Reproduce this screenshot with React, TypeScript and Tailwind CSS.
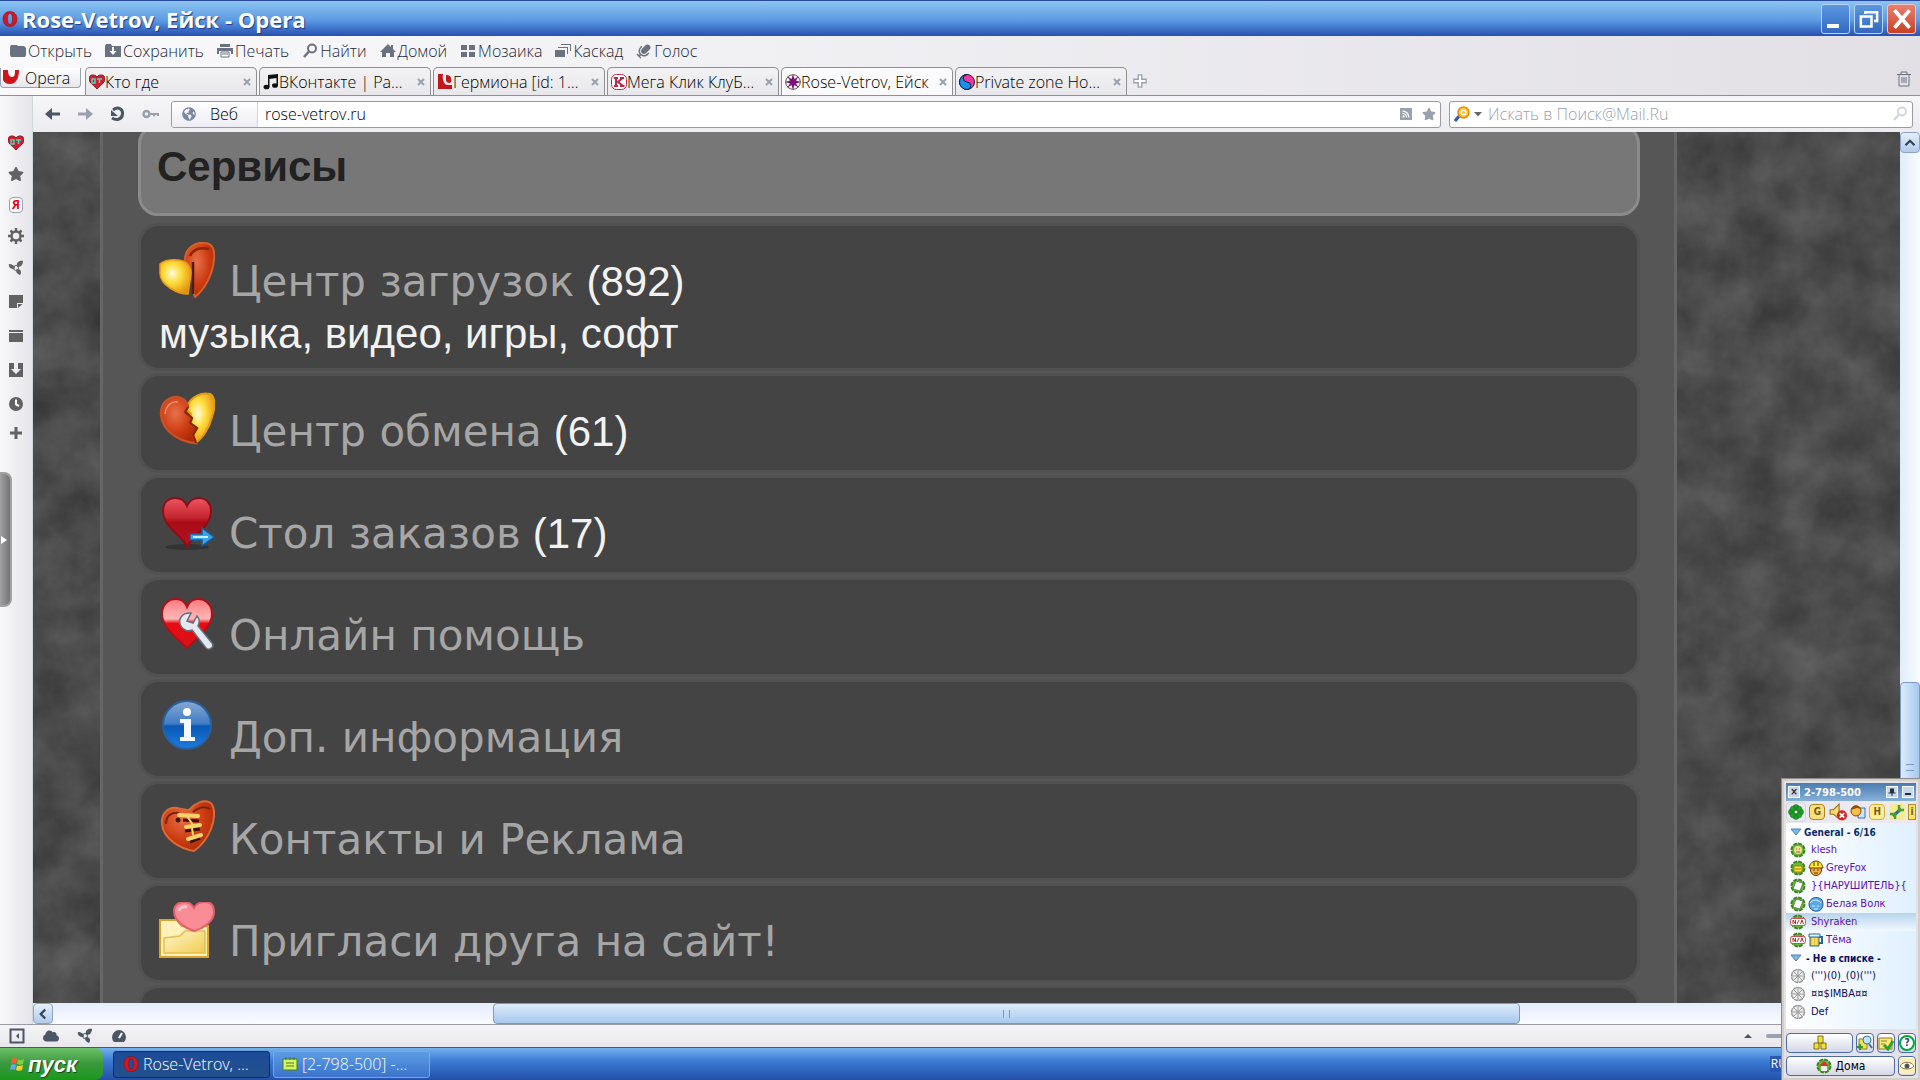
import type { ReactNode } from "react";
import { FaCloud, FaGlobeAmericas, FaMicrophone, FaRss, FaStar } from "react-icons/fa";

const UI = "font-['Open_Sans','Noto_Sans',sans-serif]";

const HEART = "M28 52 C20 44 3 32 3 18 C3 8 10 3 17 3 C22 3 26 6 28 11 C30 6 34 3 39 3 C46 3 53 8 53 18 C53 32 36 44 28 52 Z";

function Gradients() {
  return (
    <svg width="0" height="0" className="absolute" aria-hidden="true">
      <defs>
        <radialGradient id="gold" cx="0.4" cy="0.4" r="0.7">
          <stop offset="0" stopColor="#fffbe0" />
          <stop offset="0.4" stopColor="#ffdd3c" />
          <stop offset="1" stopColor="#e08a08" />
        </radialGradient>
        <radialGradient id="rust" cx="0.4" cy="0.35" r="0.7">
          <stop offset="0" stopColor="#e8714a" />
          <stop offset="0.6" stopColor="#cc3c12" />
          <stop offset="1" stopColor="#a82a08" />
        </radialGradient>
        <linearGradient id="red" x1="0" y1="0" x2="0" y2="1">
          <stop offset="0" stopColor="#ee5560" />
          <stop offset="0.4" stopColor="#c42630" />
          <stop offset="0.5" stopColor="#a80c16" />
          <stop offset="1" stopColor="#b41420" />
        </linearGradient>
        <linearGradient id="gloss" x1="0" y1="0" x2="0" y2="1">
          <stop offset="0" stopColor="#ff7a80" />
          <stop offset="0.4" stopColor="#ffb8b8" />
          <stop offset="0.5" stopColor="#e80c14" />
          <stop offset="1" stopColor="#d81018" />
        </linearGradient>
        <linearGradient id="info" x1="0" y1="0" x2="0" y2="1">
          <stop offset="0" stopColor="#86a8d4" />
          <stop offset="0.48" stopColor="#3f7cc4" />
          <stop offset="0.52" stopColor="#0a58b4" />
          <stop offset="1" stopColor="#1c7ce0" />
        </linearGradient>
        <linearGradient id="folder" x1="0" y1="0" x2="1" y2="1">
          <stop offset="0" stopColor="#fff6cc" />
          <stop offset="1" stopColor="#f0cc50" />
        </linearGradient>
      </defs>
    </svg>
  );
}

function Big({ children }: { children: ReactNode }) {
  return <svg viewBox="0 0 56 56" className="size-14 shrink-0 self-start" aria-hidden="true">{children}</svg>;
}

const DownloadsIcon = () => (
  <Big>
    <path d="M26 18 C26 7 35 0 45 1 C54 1 56 8 55 17 C54 33 45 48 36 55 C34 52 34 40 33 30 C32 24 28 24 26 18 Z" fill="url(#rust)" stroke="#d8602a" strokeWidth="2" />
    <path d="M31 14 C34 7 41 5 50 7" fill="none" stroke="#8c2405" strokeWidth="2.500" />
    <path d="M34 20 L34 52" stroke="#5a1a08" strokeWidth="2.500" />
    <path d="M1 22 C6 17 16 17 24 19 C30 22 32 26 32 32 L29 52 C20 52 0 44 1 30 Z" fill="url(#gold)" stroke="#e89a14" strokeWidth="1.500" />
  </Big>
);

const ExchangeIcon = () => (
  <Big>
    <path d="M28 14 C32 5 42 0 51 2 C57 5 56 17 53 25 C50 37 43 47 36 51 L33 46 L37 36 L30 30 L32 22 L28 18 Z" fill="url(#gold)" stroke="#e89a14" strokeWidth="2" />
    <path d="M2 22 C2 10 10 5 18 5 C24 6 28 9 29 15 L26 20 L33 26 L31 31 L38 36 L34 43 L37 51 C26 51 3 42 2 22 Z" fill="url(#rust)" stroke="#c85024" strokeWidth="2.500" />
    <path d="M6 22 C7 13 13 9 19 10" fill="none" stroke="#f09070" strokeWidth="1.500" />
    <path d="M29 15 L26 20 L33 26 L31 31 L38 36 L34 43 L37 51" fill="none" stroke="#8c2405" strokeWidth="2" />
  </Big>
);

const OrdersIcon = () => (
  <Big>
    <ellipse cx="28" cy="53" rx="22" ry="3" fill="#333" />
    <path d="M28 53 C25 42 4 34 4 17 C4 8 10 4 16 4 C22 4 26 7 28 12 C30 7 34 4 40 4 C47 4 52 9 52 17 C52 34 32 42 28 53 Z" fill="url(#red)" stroke="#8a1018" strokeWidth="2" />
    <path d="M31 40 H43 V34 L55 43 L43 52 V46 H31 Z" fill="#3aa4ea" stroke="#1a5c98" strokeWidth="1.500" />
    <path d="M34 43 H49" stroke="#c4ecff" strokeWidth="2" />
  </Big>
);

const HelpIcon = () => (
  <Big>
    <path d={HEART} fill="url(#gloss)" stroke="#b01018" strokeWidth="2" />
    <path d="M32 17 C24 16 18 23 22 30 C24 34 29 36 33 34 L47 52 C50 55 56 51 53 47 L39 30 C41 26 40 22 38 20 L34 27 L28 25 Z" fill="#e4e8f0" stroke="#686c78" strokeWidth="1.500" />
  </Big>
);

const InfoIcon = () => (
  <Big>
    <circle cx="28" cy="27" r="24" fill="url(#info)" stroke="#2a609c" strokeWidth="2" />
    <circle cx="28" cy="14" r="4" fill="#fff" />
    <path d="M21 21 H32 V39 H36 V43 H21 V39 H25 V25 H21 Z" fill="#f4f8ff" />
  </Big>
);

const ContactsIcon = () => (
  <Big>
    <path d="M3 24 C2 12 10 7 18 8 C23 9 27 10 30 10 C36 3 44 0 50 2 C57 5 56 19 52 29 C48 39 42 46 35 51 C22 49 4 39 3 24 Z" fill="url(#rust)" stroke="#dc6a34" strokeWidth="2" />
    <path d="M7 24 C7 15 13 12 20 13 M34 12 C40 7 46 6 51 9" fill="none" stroke="#7c2206" strokeWidth="2" />
    <circle cx="19" cy="20" r="2.500" fill="#501404" />
    <path d="M24 20 L40 21 M26 31 L41 29 M31 42 L41 38" stroke="#401004" strokeWidth="3" />
    <path d="M20 15 L39 16 M27 27 L41 25 M29 39 L42 35" stroke="#f6d468" strokeWidth="4" strokeLinecap="round" />
    <path d="M28 16 L34 25 M33 28 L34 35" stroke="#f6d468" strokeWidth="2" />
  </Big>
);

const InviteIcon = () => (
  <Big>
    <path d="M1 18 H18 L23 24 H49 V55 H1 Z" fill="#fff2bc" stroke="#d8a430" strokeWidth="2" />
    <path d="M5 36 L21 34 L26 29 H46 V51 H5 Z" fill="url(#folder)" stroke="#e8bc4c" strokeWidth="1.500" />
    <path d="M35 29 C28 27 15 20 15 9 C15 3 20 0 25 0 C30 0 33 2 35 6 C37 2 41 0 46 0 C52 0 55 4 55 10 C55 20 43 27 35 29 Z" fill="#f98c94" stroke="#e0606c" strokeWidth="2" />
    <path d="M20 9 C21 5 25 4 28 5" fill="none" stroke="#ffc8cc" strokeWidth="3" />
  </Big>
);

const services = [
  { title: "Центр загрузок", count: 892, note: "музыка, видео, игры, софт", icon: <DownloadsIcon /> },
  { title: "Центр обмена", count: 61, icon: <ExchangeIcon /> },
  { title: "Стол заказов", count: 17, icon: <OrdersIcon /> },
  { title: "Онлайн помощь", icon: <HelpIcon /> },
  { title: "Доп. информация", icon: <InfoIcon /> },
  { title: "Контакты и Реклама", icon: <ContactsIcon /> },
  { title: "Пригласи друга на сайт!", icon: <InviteIcon /> },
];

function Glyph({ children, className = "size-4" }: { children: ReactNode; className?: string }) {
  return <svg viewBox="0 0 16 16" className={`${className} shrink-0`} fill="currentColor" aria-hidden="true">{children}</svg>;
}

const OperaO = ({ className = "size-4" }: { className?: string }) => (
  <Glyph className={className}>
    <path fillRule="evenodd" fill="#d8141c" stroke="#8c0810" strokeWidth="0.500" d="M8 .5 C12.500 .5 15 4 15 8 C15 12 12.500 15.500 8 15.500 C3.500 15.500 1 12 1 8 C1 4 3.500 .5 8 .5 Z M8 2.500 C6 2.500 5.500 5 5.500 8 C5.500 11 6 13.500 8 13.500 C10 13.500 10.500 11 10.500 8 C10.500 5 10 2.500 8 2.500 Z" />
  </Glyph>
);

const SharePetals = () => (
  <Glyph>
    <path d="M9 6 C8 3 11 0 15 1 C15 4 13 7 10 7 Z" />
    <path d="M6 9 C3 9 0 7 1 4 C4 4 6 5 7 8 Z" />
    <path d="M9 9 C13 9 14 12 12 15 C9 14 8 12 8 10 Z" />
    <circle cx="8" cy="8" r="2.500" fill="none" stroke="currentColor" />
  </Glyph>
);

const HeartBT = () => (
  <Glyph>
    <path d="M8 15 C6 12 0 9 0 5 C0 0 6 0 8 3 C10 0 16 0 16 5 C16 9 10 12 8 15 Z" fill="#d81c30" stroke="#7c1420" />
    <path d="M3 5 H6 V9 H3 Z M8 5 H13 M10.500 5 V9" fill="none" stroke="#48d8c0" strokeWidth="1.500" />
  </Glyph>
);

const Magnifier = () => (
  <Glyph>
    <circle cx="10" cy="5.500" r="4" fill="none" stroke="currentColor" strokeWidth="2" />
    <path d="M7 8.500 L2 14" stroke="currentColor" strokeWidth="2.500" />
  </Glyph>
);

const menu = [
  { label: "Открыть", icon: <Glyph><path d="M0 4 L1 2 H7 L8 3 H14 L16 5 V12 L15 14 H1 L0 12 Z" /></Glyph> },
  { label: "Сохранить", icon: <Glyph><path fillRule="evenodd" d="M0 3 L1 1 H6 L7 3 H16 V14 H0 Z M7 4 V8 H4.500 L8 12 L11.500 8 H9 V4 Z" /></Glyph> },
  { label: "Печать", icon: <Glyph><path d="M3 1 H13 V4 H3 Z M0 5 H16 V11 H14 V8 H2 V11 H0 Z" /><path d="M4 9 H12 V14 H4 Z M5 11 H11" fill="#fff" stroke="currentColor" /></Glyph> },
  { label: "Найти", icon: <Magnifier /> },
  { label: "Домой", icon: <Glyph><path d="M8 1 L11 4 V2 H13 V6 L16 9 H14 V14 H10 V10 H6 V14 H2 V9 H0 Z" /></Glyph> },
  { label: "Мозаика", icon: <Glyph><path d="M1 2 H7 V7 H1 Z M9 2 H15 V7 H9 Z M1 9 H7 V14 H1 Z M9 9 H15 V14 H9 Z" /></Glyph> },
  { label: "Каскад", icon: <Glyph><path d="M0 7 H10 V14 H0 Z M3 4 H13 V11 H12 V5 H3 Z M6 1 H16 V8 H15 V2 H6 Z" /></Glyph> },
  { label: "Голос", icon: <FaMicrophone className="size-4 rotate-45 text-gray-500" /> },
];

const tabs = [
  { title: "Кто где", icon: <HeartBT /> },
  { title: "ВКонтакте | Ра…", icon: <Glyph><path d="M5 1 L15 0 V11 H13.500 V4 L6.500 5 V13 H5 Z" fill="#111" /><ellipse cx="3.500" cy="13" rx="3" ry="2.300" fill="#111" /><ellipse cx="12" cy="11.500" rx="3" ry="2.300" fill="#111" /></Glyph> },
  { title: "Гермиона [id: 1…", icon: <Glyph><path d="M1 0 H6 C5 6 7 11 11 11 H15 V15 H1 Z" fill="#c4141c" /><path d="M9 1 C13 1 15 3 14 8 C13 10 9 9 9 6 Z" fill="#c4141c" /></Glyph> },
  { title: "Мега Клик КлуБ…", icon: <Glyph><rect x="0.500" y="0.500" width="15" height="15" rx="5" fill="#fff" stroke="#b82848" /><path d="M3 4 H7 M3 12 H7 M5 4 V12 M9 4 H13 M9 12 H13.500 M11.500 4 L7 8 L12 12" fill="none" stroke="#b82848" strokeWidth="2" /></Glyph> },
  { title: "Rose-Vetrov, Ейск", active: true, icon: <Glyph><circle cx="8" cy="8" r="7.300" fill="#fff" stroke="#554" /><path d="M8 0 L9.500 5 L14 2 L11 6.500 L16 8 L11 9.500 L14 14 L9.500 11 L8 16 L6.500 11 L2 14 L5 9.500 L0 8 L5 6.500 L2 2 L6.500 5 Z" fill="#7c1478" /></Glyph> },
  { title: "Private zone Ho…", icon: <Glyph><circle cx="8" cy="8" r="7.500" fill="#f038a0" stroke="#102040" /><path d="M8 .5 A7.500 7.500 0 0 0 8 15.500 A3.700 3.700 0 0 0 8 8 A3.700 3.700 0 0 1 8 .5" fill="#1890f0" stroke="#102040" /></Glyph> },
];

const panelsTop = [
  { label: "BT", icon: <HeartBT /> },
  { label: "Закладки", icon: <FaStar className="size-4" /> },
  { label: "Яндекс", icon: <span className="rounded-sm border border-gray-400 bg-white px-[2px] text-xs leading-[14px] font-bold text-red-600">Я</span> },
  { label: "Настройки", icon: <Glyph><circle cx="8" cy="8" r="4.500" fill="none" stroke="currentColor" strokeWidth="2.500" /><path d="M8 0 V3 M8 13 V16 M0 8 H3 M13 8 H16 M2.500 2.500 L4.500 4.500 M11.500 11.500 L13.500 13.500 M2.500 13.500 L4.500 11.500 M11.500 4.500 L13.500 2.500" stroke="currentColor" strokeWidth="2.500" /></Glyph> },
];

const panelsBottom = [
  { label: "Unite", icon: <SharePetals /> },
  { label: "Заметки", icon: <Glyph><path d="M1 1 H15 V9 H9 V14 H1 Z M10 10 H14.500 L10 14 Z" /></Glyph> },
  { label: "Окна", icon: <Glyph><path d="M1 2 H15 V4 H1 Z M1 5 H15 V14 H1 Z" /></Glyph> },
  { label: "Загрузки", icon: <Glyph><path d="M1 1 H6 V7 H3 L8 12 L13 7 H10 V1 H15 V15 H1 Z" /></Glyph> },
  { label: "История", icon: <Glyph><circle cx="8" cy="8" r="7" /><path d="M8 3.500 V8.500 L11 10" fill="none" stroke="#fff" strokeWidth="2" /></Glyph> },
];

const Flower = ({ color }: { color: string }) => (
  <svg viewBox="0 0 16 16" className="size-4 shrink-0" aria-hidden="true">
    <g fill={color} stroke="#145c1c" strokeWidth="0.500">
      <circle cx="8" cy="3.500" r="3" /><circle cx="8" cy="12.500" r="3" /><circle cx="3.500" cy="8" r="3" /><circle cx="12.500" cy="8" r="3" />
      <circle cx="4.800" cy="4.800" r="2.500" /><circle cx="11.200" cy="4.800" r="2.500" /><circle cx="4.800" cy="11.200" r="2.500" /><circle cx="11.200" cy="11.200" r="2.500" />
    </g>
  </svg>
);

function StatusIcon({ kind }: { kind: string }) {
  if (kind === "off") {
    return (
      <svg viewBox="0 0 16 16" className="size-4 shrink-0" aria-hidden="true">
        <circle cx="8" cy="8" r="6.500" fill="#eee" stroke="#999" strokeWidth="1.500" strokeDasharray="4 1" />
        <path d="M8 1 V15 M1 8 H15 M3 3 L13 13 M3 13 L13 3" stroke="#999" />
      </svg>
    );
  }
  return (
    <svg viewBox="0 0 16 16" className="size-4 shrink-0" aria-hidden="true">
      <circle cx="8" cy="8" r="6.500" fill="#6cb83c" stroke="#3c8424" strokeWidth="2" strokeDasharray="4 1" />
      {kind === "chat" && <><circle cx="8" cy="8" r="4" fill="#f4dc8c" /><path d="M6 7 H7 M9 7 H10 M6 10 H10" stroke="#864" /></>}
      {kind === "work" && <path d="M4 6 H12 V12 H4 Z M6 8 V10 M8 8 V10 M10 8 V10" fill="#f8e838" stroke="#987c10" />}
      {kind === "away" && <path d="M6 3 L13 5 L10 13 L3 11 Z" fill="#fff" stroke="#5a8c4c" />}
      {kind === "na" && <><rect x="0.500" y="4.500" width="15" height="7" rx="2" fill="#fff" stroke="#d05050" /><path d="M3 10 V6 L5.500 10 V6 M7 10 L9 6 M10.500 10 L12 6 L13.500 10" fill="none" stroke="#b03030" /></>}
    </svg>
  );
}

function MoodIcon({ kind }: { kind: string }) {
  return (
    <svg viewBox="0 0 16 16" className="size-4 shrink-0" aria-hidden="true">
      {kind === "builder" && <><circle cx="8" cy="10" r="5.500" fill="#f4b040" stroke="#643808" /><path d="M1 8 C2 3 5 1 8 1 C11 1 14 3 15 8 Z M6 2 V6 M10 2 V6" fill="#ffe838" stroke="#643808" /><path d="M5 10 H7 M9 10 H11 M6 13 H10" stroke="#643808" /></>}
      {kind === "cold" && <><path d="M1 8 C1 2 9 -1 14 4 C16 8 15 14 10 15 C5 16 1 13 1 8 Z" fill="#58a8ec" stroke="#1c58a0" /><path d="M2 7 C5 3 10 3 13 7 M4 10 H7 M9 10 H11 M6 13 H10" fill="none" stroke="#e0f4ff" /></>}
      {kind === "beer" && <><path d="M11 5 H14 V11 H11" fill="none" stroke="#286898" strokeWidth="2" /><path d="M2 4 H11 V14 H2 Z" fill="#f4c430" stroke="#286898" /><path d="M1 2 H12 V5 H1 Z" fill="#e8f8ff" stroke="#286898" /><path d="M5 6 V13 M8 6 V13" stroke="#fff4a0" /></>}
    </svg>
  );
}

const contacts = [
  { name: "klesh", status: "chat" },
  { name: "GreyFox", status: "work", mood: "builder" },
  { name: "}{НАРУШИТЕЛЬ}{", status: "away" },
  { name: "Белая Волк", status: "away", mood: "cold" },
  { name: "Shyraken", status: "na", selected: true },
  { name: "Тёма", status: "na", mood: "beer" },
];

const strangers = ["(''')(0)_(0)(''')", "¤¤$IMBA¤¤", "Def"];

const Arrow = () => <svg viewBox="0 0 12 8" className="h-2 w-3 shrink-0" aria-hidden="true"><path d="M1 1 H11 L6 7 Z" fill="#7cb8e8" stroke="#4c80b8" /></svg>;

function Messenger() {
  const small = "flex h-5 items-center justify-center rounded-sm border border-[#4a6aa8] bg-linear-to-b from-white to-[#d4d8e4]";
  return (
    <aside className="absolute right-0 bottom-0 z-10 flex w-[138px] flex-col border-2 border-[#d4d0c8] bg-[#e4e2e8] p-[2px] font-['DejaVu_Sans_Condensed','DejaVu_Sans',sans-serif] shadow-[0_0_0_1px_#8c8c8c]">
      <header className="flex h-[18px] items-center gap-1 bg-linear-to-b from-[#4a7cb0] to-[#86b0d8] px-[2px] text-white">
        <button aria-label="Закрыть" className="flex size-3 items-center justify-center border border-white bg-[#c8d8e8] text-[10px] leading-none font-bold text-slate-800">×</button>
        <span className="grow font-['DejaVu_Sans',sans-serif] text-[10px] font-bold">2-798-500</span>
        <button aria-label="Закрепить" className="flex size-3 items-center justify-center border border-white bg-[#c8d8e8]"><Glyph className="size-2"><path d="M4 1 H12 V9 H15 V11 H9 V16 H7 V11 H1 V9 H4 Z" fill="#234" /></Glyph></button>
        <button aria-label="Свернуть" className="flex size-3 items-end border border-white bg-[#c8d8e8] p-[2px]"><i className="h-[2px] w-full bg-slate-800" /></button>
      </header>
      <div className="flex h-[22px] items-center justify-between overflow-hidden bg-[#ece8f0]">
        <button aria-label="Статус" className="rounded border border-gray-300 p-px"><Flower color="#1ca428" /></button>
        <button aria-label="Группы" className="size-4 rounded-sm border border-[#a8841c] bg-[#f8e080] text-[10px] leading-none font-bold text-[#7c5c08]">G</button>
        <button aria-label="Звук"><Glyph className="size-[18px]"><path d="M1 6 H4 L9 1 V14 L4 10 H1 Z" fill="#f4dc70" stroke="#98741c" /><circle cx="11.500" cy="11" r="4.500" fill="#e02020" /><path d="M9.500 9 L13.500 13 M13.500 9 L9.500 13" stroke="#fff" strokeWidth="1.500" /></Glyph></button>
        <button aria-label="Анкета"><Glyph><path d="M8 4 H15 V14 H8 Z" fill="#d0e4fc" stroke="#3c70b0" /><circle cx="6" cy="7" r="5" fill="#f8c048" stroke="#804c08" /><path d="M1 6 C2 0 9 0 11 5 L7 4 Z" fill="#8c5008" /></Glyph></button>
        <button aria-label="История" className="size-4 rounded border border-[#d0b040] bg-[#fcec98] text-[10px] leading-none font-bold text-[#7c5c08]">H</button>
        <button aria-label="Настройки"><Glyph><rect width="16" height="16" rx="3" fill="#f4ec90" /><path d="M4 12 L12 5" stroke="#2c68a8" strokeWidth="3" /><path d="M10 1 L10 6 L15 6 M1 10 L6 10 L6 15" fill="none" stroke="#48a030" strokeWidth="2.500" /></Glyph></button>
        <button aria-label="Сведения" className="h-4 w-2 border border-[#b08c1c] bg-[#fce468] text-[10px] leading-none font-bold text-[#7c5c08]">i</button>
      </div>
      <div className="bg-linear-to-r from-white to-[#e0f0ff] pb-2 text-[11px] text-[#5c10b8]">
        <h3 className="flex h-[18px] items-center gap-[2px] pl-1 text-[10px] font-bold text-[#0c2c68]"><Arrow />General - 6/16</h3>
        <ul>
          {contacts.map((c) => (
            <li key={c.name} className={`flex h-[18px] items-center gap-[2px] pl-1 whitespace-nowrap ${c.selected ? "bg-linear-to-b from-[#b8d4ec] to-[#f0f8ff]" : ""}`}>
              <StatusIcon kind={c.status} />
              {c.mood && <MoodIcon kind={c.mood} />}
              <span className={c.mood ? "" : "pl-[3px]"}>{c.name}</span>
            </li>
          ))}
        </ul>
        <h3 className="flex h-[18px] items-center gap-1 pl-1 text-[10px] font-bold text-[#0c0c60]"><Arrow />- Не в списке -</h3>
        <ul className="text-[#0c0c60]">
          {strangers.map((name) => (
            <li key={name} className="flex h-[18px] items-center gap-[2px] pl-1"><StatusIcon kind="off" /><span className="pl-[3px]">{name}</span></li>
          ))}
        </ul>
      </div>
      <footer className="flex flex-col gap-[3px] pt-1">
        <div className="flex gap-[3px]">
          <button aria-label="Меню" className={`${small} grow`}><Glyph><path d="M6 1 H11 V8 H6 Z M2 8 H7 V14 H2 Z M9 8 H14 V14 H9 Z" fill="#f4e038" stroke="#807410" /></Glyph></button>
          <button aria-label="Поиск контакта" className={`${small} w-[18px]`}><Glyph><path d="M2 4 H10 V14 H2 Z" fill="#f8e048" stroke="#98801c" /><circle cx="10" cy="5" r="4" fill="#c0e4fc" stroke="#3474b0" /><path d="M12 9 L15 13" stroke="#3474b0" strokeWidth="2" /><path d="M3 9 V15 M0 12 H6" stroke="#2c9c20" strokeWidth="2" /></Glyph></button>
          <button aria-label="Список" className={`${small} w-[18px]`}><Glyph><path d="M1 3 H14 V14 H1 Z M3 6 H9 M3 9 H7" fill="#f8e878" stroke="#98801c" /><path d="M6 10 L10 14 L15 6" fill="none" stroke="#2ca030" strokeWidth="3" /></Glyph></button>
          <button aria-label="Справка" className={`${small} w-[18px] text-[10px] font-bold text-gray-700`}><span className="flex size-4 items-center justify-center rounded-full border-2 border-green-600 bg-white leading-none">?</span></button>
        </div>
        <div className="flex gap-[3px]">
          <button className={`${small} grow gap-1 text-xs text-black`}><Glyph><circle cx="8" cy="8" r="6.500" fill="#6cb83c" stroke="#3c8424" strokeWidth="2" strokeDasharray="4 1" /><path d="M8 3 L13 8 H3 Z" fill="#d83030" /><path d="M5 8 H11 V13 H5 Z" fill="#f0f0f0" /></Glyph>Дома</button>
          <button aria-label="Видимость" className={`${small} w-[18px]`}><Glyph><rect width="16" height="16" rx="3" fill="#fcf0b8" /><path d="M1 8 C4 3 12 3 15 8 C12 12 4 12 1 8 Z" fill="#fff" stroke="#887850" /><circle cx="8" cy="8" r="2.500" fill="#555" /></Glyph></button>
        </div>
      </footer>
    </aside>
  );
}

// stone texture on both sides of the page column
function Grunge() {
  return (
    <svg className="absolute inset-0 size-full" aria-hidden="true">
      <filter id="grunge" x="0" y="0" width="100%" height="100%" colorInterpolationFilters="sRGB">
        <feTurbulence type="fractalNoise" baseFrequency="0.02" numOctaves="5" seed="8" />
        <feColorMatrix values="0.2 0 0 0 0.195  0.2 0 0 0 0.195  0.2 0 0 0 0.195  0 0 0 0 1" />
      </filter>
      <rect width="100%" height="100%" filter="url(#grunge)" />
    </svg>
  );
}

function Page() {
  return (
    <main className="relative min-w-0 grow overflow-hidden bg-[#4b4b4b]">
      <Grunge />
      <div className="relative mr-[223px] ml-[67px] flex h-full flex-col border-x-[3px] border-[#666] bg-[#565656] pr-[34px] pl-[35px]">
        <h2 className="-mt-2 shrink-0 rounded-[20px] border-[3px] border-[#8b8b8b] bg-[#777] px-4 pt-4 pb-[22px] font-['Liberation_Sans',sans-serif] text-[42px] leading-[48px] font-bold text-[#222]">Сервисы</h2>
        <ul className="mt-[10px] flex flex-col gap-2 px-[3px]">
          {services.map((s) => (
            <li key={s.title} className="rounded-[18px] bg-[#444] px-[18px] pt-4 ring-[3px] ring-[#515151]">
              <div className="flex h-[62px] items-end gap-[14px]">
                {s.icon}
                <p className="flex items-baseline gap-3 leading-[44px] whitespace-nowrap">
                  <a href="#" className="font-['DejaVu_Sans',sans-serif] text-[42px] text-[#a6a6a6]">{s.title}</a>
                  {s.count && <span className="font-['Liberation_Sans',sans-serif] text-[42px] text-[#f2f2f2]">({s.count})</span>}
                </p>
              </div>
              {s.note ? <p className="pt-1 pb-2 font-['Liberation_Sans',sans-serif] text-[42px] leading-[52px] text-[#f2f2f2]">{s.note}</p> : <div className="h-4" />}
            </li>
          ))}
          <li className="h-24 shrink-0 rounded-[18px] bg-[#444] ring-[3px] ring-[#515151]" />
        </ul>
      </div>
    </main>
  );
}

const scrollBtn = "flex items-center justify-center rounded-sm border border-[#8ca4c8] bg-linear-to-b from-[#e4f0fc] to-[#b4cce8] text-[#345]";

export default function App() {
  return (
    <div className={`relative flex h-screen flex-col overflow-hidden bg-[#f4f4f6] text-base text-gray-800 ${UI}`}>
      <Gradients />
      <header className="flex h-9 shrink-0 items-center gap-1 border-t border-[#2848a0] bg-linear-to-b from-[#8cc4f0] via-[#5c9ae4] via-55% to-[#2850b0] pr-1 pl-[2px]">
        <OperaO />
        <h1 className="grow text-[22px] leading-none font-bold text-white [text-shadow:1px_1px_1px_#1c3c88]">Rose-Vetrov, Ейск - Opera</h1>
        <div className="flex gap-1">
          <button aria-label="Свернуть" className="flex h-[30px] w-[29px] items-end rounded-[3px] border border-[#b8d4f4] bg-linear-to-b from-[#5c98e0] to-[#3468c0] p-[5px]"><i className="h-1 w-3 bg-white" /></button>
          <button aria-label="Восстановить" className="flex h-[30px] w-[29px] items-center justify-center rounded-[3px] border border-[#b8d4f4] bg-linear-to-b from-[#5c98e0] to-[#3468c0] text-white"><Glyph className="size-5"><path d="M1.500 6 H10 V14 H1.500 Z M5 4 V2.500 H14.500 V9.500 H12" fill="none" stroke="currentColor" strokeWidth="2" /></Glyph></button>
          <button aria-label="Закрыть" className="flex h-[30px] w-[29px] items-center justify-center rounded-[3px] border border-[#f4c8c0] bg-linear-to-b from-[#e88070] to-[#c84020] text-white"><Glyph className="size-5"><path d="M2 1 L14 15 M14 1 L2 15" stroke="currentColor" strokeWidth="3" /></Glyph></button>
        </div>
      </header>

      <div className="shrink-0 bg-linear-to-r from-[#fafafc] to-[#e2e0e5]">
        <nav className="flex h-8 items-center gap-[13px] px-[10px] pb-[2px] font-light">
          {menu.map((m) => (
            <button key={m.label} className="flex items-center gap-[2px] text-gray-500">{m.icon}<span className="text-gray-800">{m.label}</span></button>
          ))}
        </nav>
        <div className="flex h-7 items-end border-b border-[#8e8e94]">
          <button className="mr-1 flex h-5 w-[81px] items-center gap-1 self-start rounded-b border border-t-0 border-gray-400 bg-linear-to-b from-white to-gray-200 font-light text-black">
            <Glyph className="h-4 w-5"><path d="M0 0 H5 C5 4 6 7 9 7 C12 7 12 4 12 0 H16 C16 8 13 14 7 14 C3 14 1 12 0 10 Z" fill="#d0141c" /></Glyph>Opera
          </button>
          <div className="flex gap-[2px]">
            {tabs.map((t) => (
              <div key={t.title} className={`flex h-7 w-[172px] items-center rounded-t-[5px] border border-b-0 border-[#8e8e94] px-[3px] ${t.active ? "-mb-px bg-[#fafafc]" : "bg-linear-to-b from-[#f2f2f4] to-[#e8e8ec]"}`}>
                {t.icon}
                <a href="#" className="grow overflow-hidden font-light whitespace-nowrap text-black">{t.title}</a>
                <button aria-label="Закрыть вкладку" className="shrink-0 px-[2px] text-gray-400"><Glyph className="size-2"><path d="M2 2 L14 14 M14 2 L2 14" stroke="currentColor" strokeWidth="4" /></Glyph></button>
              </div>
            ))}
          </div>
          <button aria-label="Новая вкладка" className="mb-[7px] ml-[6px] text-gray-400"><Glyph className="size-[14px]"><path d="M6 1 H10 V6 H15 V10 H10 V15 H6 V10 H1 V6 H6 Z" fill="#fff" stroke="currentColor" strokeWidth="1.500" /></Glyph></button>
          <button aria-label="Корзина" className="mr-2 mb-2 ml-auto text-gray-500"><Glyph><path d="M1 3.500 H15 M5 3 V1 H11 V3 M3 4 V15 H13 V4 M6 6 V12 M8 6 V12 M10 6 V12" fill="none" stroke="currentColor" /></Glyph></button>
        </div>
      </div>

      <div className="flex min-h-0 grow">
        <aside className="relative w-[33px] shrink-0 border-r border-gray-300 bg-linear-to-r from-[#f8f8fa] to-[#e4e4ea] pt-[31px] text-[#626262]">
          {panelsTop.map((p) => <button key={p.label} aria-label={p.label} className="flex h-[31px] w-full items-center justify-center">{p.icon}</button>)}
          {panelsBottom.map((p) => <button key={p.label} aria-label={p.label} className="flex h-[34px] w-full items-center justify-center">{p.icon}</button>)}
          <button aria-label="Добавить" className="flex h-6 w-full items-center justify-center"><Glyph className="size-3"><path d="M6 0 H10 V6 H16 V10 H10 V16 H6 V10 H0 V6 H6 Z" /></Glyph></button>
          <button aria-label="Панели" className="absolute top-[376px] left-0 flex h-[135px] w-3 items-center rounded-r-lg border-2 border-l-0 border-neutral-400 bg-linear-to-r from-neutral-400 to-neutral-500 text-white"><Glyph className="size-2"><path d="M2 0 L14 8 L2 16 Z" /></Glyph></button>
        </aside>

        <div className="flex min-w-0 grow flex-col">
          <form className="flex h-9 shrink-0 items-center bg-linear-to-b from-[#f6f6f8] to-[#ececf0] pr-[7px]">
            <div className="flex w-[138px] items-center gap-4 pl-3 text-gray-600">
              <button type="button" aria-label="Назад"><Glyph><path d="M0 8 L7 2 V6.500 H15 V9.500 H7 V14 Z" /></Glyph></button>
              <button type="button" aria-label="Вперёд" className="text-gray-400"><Glyph><path d="M16 8 L9 2 V6.500 H1 V9.500 H9 V14 Z" /></Glyph></button>
              <button type="button" aria-label="Обновить"><Glyph><path d="M4 4 C9 0 14 3 13.500 8 C13 14 7 14.500 3 12" fill="none" stroke="currentColor" strokeWidth="3" /><path d="M2 4 V10 H9 Z" /></Glyph></button>
              <button type="button" aria-label="Пароли" className="text-gray-400"><Glyph className="h-4 w-5"><circle cx="3.500" cy="8" r="3" fill="none" stroke="currentColor" strokeWidth="2.500" /><path d="M6 7 H16 V10 H14 V9 H12 V10.500 H10 V9 H6 Z" /></Glyph></button>
            </div>
            <div className="flex h-[27px] grow items-center overflow-hidden rounded-[3px] border border-[#9a9aa0] bg-white pr-1">
              <button type="button" className="flex h-full w-[86px] items-center gap-[14px] border-r border-gray-300 bg-linear-to-b from-white to-[#ececf2] pl-[10px] font-light text-black"><FaGlobeAmericas className="size-[14px] text-[#7888a4]" />Веб</button>
              <input aria-label="Адрес" defaultValue="rose-vetrov.ru" className="h-full min-w-0 grow px-[7px] font-light text-black outline-none" />
              <FaRss className="mr-[10px] size-3 bg-gray-400 p-[2px] text-white" />
              <FaStar className="size-[14px] text-gray-400" />
            </div>
            <div className="ml-2 flex h-[27px] w-[464px] items-center gap-1 rounded-[3px] border border-[#9a9aa0] bg-white px-1">
              <Glyph><path d="M6 9 L1 15" stroke="#2c5ca8" strokeWidth="3" /><circle cx="9.500" cy="6.500" r="5.500" fill="#fbc42c" stroke="#e88c10" strokeWidth="1.500" /><circle cx="9.500" cy="6.500" r="2.300" fill="none" stroke="#fff" strokeWidth="1.500" /></Glyph>
              <Glyph className="size-2"><path d="M0 4 H16 L8 13 Z" fill="#666" /></Glyph>
              <input aria-label="Поиск" placeholder="Искать в Поиск@Mail.Ru" className="h-full min-w-0 grow pl-[2px] font-light outline-none placeholder:text-gray-400" />
              <span className="text-gray-300"><Magnifier /></span>
            </div>
          </form>

          <div className="flex min-h-0 grow">
            <Page />
            <div className="flex w-5 shrink-0 flex-col bg-linear-to-r from-[#e0ecfc] to-[#f8fcff]">
              <button aria-label="Вверх" className={`${scrollBtn} h-[21px]`}><Glyph className="size-3"><path d="M2 11 L8 5 L14 11" fill="none" stroke="currentColor" strokeWidth="3" /></Glyph></button>
              <div className="grow-[535]" />
              <div className="flex grow-[163] items-center justify-center rounded-sm border border-[#7c98c4] bg-linear-to-r from-[#dcecfc] to-[#a8c8ec]"><i className="h-[7px] w-2 border-y border-[#7c98c4]" /></div>
              <div className="grow-[131]" />
              <button aria-label="Вниз" className={`${scrollBtn} h-[21px]`}><Glyph className="size-3"><path d="M2 5 L8 11 L14 5" fill="none" stroke="currentColor" strokeWidth="3" /></Glyph></button>
            </div>
          </div>
          <div className="flex h-[21px] shrink-0 bg-linear-to-b from-[#e4ecfc] to-[#fafcff] pr-5">
            <button aria-label="Влево" className={`${scrollBtn} w-5`}><Glyph className="size-3"><path d="M11 2 L5 8 L11 14" fill="none" stroke="currentColor" strokeWidth="3" /></Glyph></button>
            <div className="grow-[442]" />
            <div className="flex grow-[1023] items-center justify-center rounded-sm border border-[#7c98c4] bg-linear-to-b from-[#dcecfc] to-[#a8c8ec]"><i className="h-2 w-[7px] border-x border-[#7c98c4]" /></div>
            <div className="grow-[362]" />
            <button aria-label="Вправо" className={`${scrollBtn} w-5`}><Glyph className="size-3"><path d="M5 2 L11 8 L5 14" fill="none" stroke="currentColor" strokeWidth="3" /></Glyph></button>
          </div>
        </div>
      </div>

      <div className="flex h-[23px] shrink-0 items-center gap-[18px] border-t border-[#9a9aa0] bg-linear-to-b from-[#f4f4f6] to-[#e8e6ea] pr-[100px] pl-[9px] text-gray-600">
        <button aria-label="Панель"><Glyph><path d="M1.500 1.500 H14.500 V14.500 H1.500 Z" fill="none" stroke="currentColor" strokeWidth="2" /><path d="M10 5 V11 L7 8 Z" /></Glyph></button>
        <button aria-label="Link"><FaCloud className="size-4" /></button>
        <button aria-label="Unite"><SharePetals /></button>
        <button aria-label="Turbo"><Glyph><path d="M3 14 A7 7 0 1 1 13 14 Z" /><path d="M8 10 L11 5" stroke="#fff" strokeWidth="2" /></Glyph></button>
        <div className="ml-auto flex items-center gap-[14px]">
          <Glyph className="size-2"><path d="M0 12 L8 4 L16 12 Z" /></Glyph>
          <i className="h-1 w-[54px] rounded bg-gray-400" />
        </div>
      </div>

      <footer className="flex h-[33px] shrink-0 items-center gap-[3px] border-t border-[#2c58b0] bg-linear-to-b from-[#74b0ec] via-[#3c7cd4] via-40% to-[#2450a8] text-white">
        <button className="mr-[7px] flex h-full w-[103px] items-center gap-[2px] rounded-r-lg bg-linear-to-b from-[#6cc068] via-[#38983c] to-[#189818] pl-[10px] font-['Liberation_Sans',sans-serif] text-[22px] font-bold italic [text-shadow:1px_1px_1px_#124c14]">
          <Glyph><path d="M2 3 C4 1 6 2 7 3 L6 8 C5 7 3 7 1 8 Z" fill="#f06030" /><path d="M8 3.500 C10 5 12 4 14 3 L13 8 C11 9 9 9 7 8 Z" fill="#80d040" /><path d="M1 9 C3 8 5 8 6 9 L5 14 C4 13 2 13 0 14 Z" fill="#60a8f8" /><path d="M7 9.500 C9 10.500 11 10 13 9 L12 14 C10 15 8 15 6 14 Z" fill="#f8d030" /></Glyph>
          пуск
        </button>
        <button className="flex h-[27px] w-[157px] items-center gap-1 rounded-[3px] border border-[#0c2c68] bg-linear-to-b from-[#1c4c98] to-[#24508c] pl-[9px] font-light"><OperaO />Rose-Vetrov, …</button>
        <button className="flex h-[27px] w-[157px] items-center gap-1 rounded-[3px] border border-[#74a8e8] bg-linear-to-b from-[#5c9ce4] to-[#3c74cc] pl-2 font-light">
          <Glyph><path d="M1 3 H15 V14 H1 Z M4 1 V4 M8 1 V4 M12 1 V4 M4 7 H12 M4 10 H12" fill="#d4f468" stroke="#4c7c10" /></Glyph>[2-798-500] -…
        </button>
        <span className="mr-[132px] ml-auto bg-[#2a58b0] px-px text-xs">RU</span>
      </footer>

      <Messenger />
    </div>
  );
}
